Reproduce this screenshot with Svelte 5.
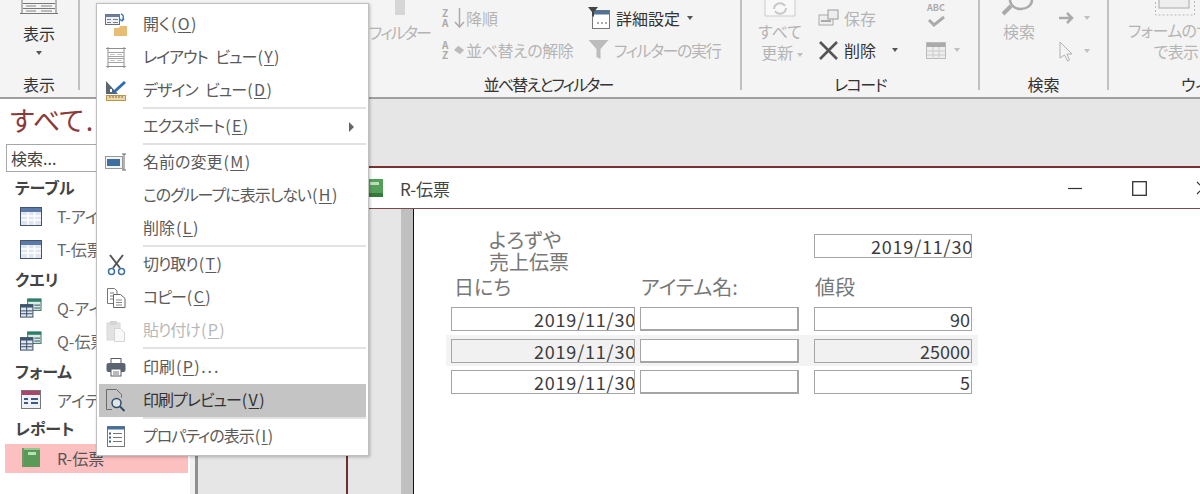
<script>
  const menu = [
    { icon: 'open', label: '開く', key: 'O' },
    { icon: 'layout', label: 'レイアウト ビュー', key: 'Y', tight: true },
    { icon: 'design', label: 'デザイン ビュー', key: 'D', tight: true, sep: true },
    { label: 'エクスポート', key: 'E', tight: true, sub: true, sep: true },
    { icon: 'rename', label: '名前の変更', key: 'M' },
    { label: 'このグループに表示しない', key: 'H', tight: true },
    { label: '削除', key: 'L', sep: true },
    { icon: 'cut', label: '切り取り', key: 'T', tight: true },
    { icon: 'copy', label: 'コピー', key: 'C', tight: true },
    { icon: 'paste', label: '貼り付け', key: 'P', tight: true, disabled: true, sep: true, wide: true },
    { icon: 'print', label: '印刷', key: 'P', more: '...' },
    { icon: 'preview', label: '印刷プレビュー', key: 'V', tight: true, active: true, sep: true },
    { icon: 'props', label: 'プロパティの表示', key: 'I', tight: true }
  ];
  const rows = [
    { date: '2019/11/30', price: '90' },
    { date: '2019/11/30', price: '25000', alt: true },
    { date: '2019/11/30', price: '5' }
  ];
</script>

{#snippet tableIcon()}
  <svg width="22" height="19" viewBox="0 0 22 19"><rect x="0.5" y="0.5" width="21" height="18" fill="#dfe6f2" stroke="#44546f"/><rect x="1" y="1" width="20" height="4" fill="#5b7aa8"/><path d="M1 9h20M1 13h20M8 5v13M14.5 5v13" stroke="#fff" stroke-width="1.5"/></svg>
{/snippet}
{#snippet queryIcon()}
  <svg width="23" height="20" viewBox="0 0 23 20"><rect x="8" y="0.5" width="14" height="12" fill="#dcebe4" stroke="#2f6f62"/><rect x="8" y="0.5" width="14" height="3" fill="#2f7d6b"/><rect x="0.5" y="6.5" width="13" height="13" fill="#dfe6ee" stroke="#33475f"/><rect x="0.5" y="6.5" width="13" height="3" fill="#3b566f"/><path d="M1 13h12M1 16h12M7 9v10M15 7h6M15 10h6" stroke="#33475f"/></svg>
{/snippet}
{#snippet icon(name)}
  {#if name === 'open'}
    <svg width="22" height="23" viewBox="0 0 22 23"><rect x="0.5" y="1.5" width="14" height="10" fill="#eef1f5" stroke="#66707c"/><rect x="0.5" y="1.5" width="14" height="2.5" fill="#6b7f99"/><path d="M2 6.500h4M2 9.500h4M8 6.500h5M8 9.500h5" stroke="#77808c"/><path d="M16 1c3 1 3 4 1 7M17 8l-2.500-2M17 8l2-2.500" fill="none" stroke="#3f78c0" stroke-width="1.5"/><path d="M9 15h5l1-2h7v10H9z" fill="#e7bd75"/></svg>
  {:else if name === 'layout'}
    <svg width="20" height="21" viewBox="0 0 20 21"><path d="M2 0v21M18 0v21M0 1.500h20M0 19.500h20" stroke="#8f8f8f" fill="none"/><path d="M2 5.500h16M2 9.500h16M2 11.500h16M2 15.500h16" stroke="#a4a4a4" fill="none"/><path d="M4 7.500h5M11 7.500h5M4 13.500h5M11 13.500h5" stroke="#c4c4c4"/></svg>
  {:else if name === 'design'}
    <svg width="22" height="21" viewBox="0 0 22 21"><path d="M1 1v13h12z" fill="#5d6570"/><path d="M5 9h2v3H5z" fill="#fff"/><path d="M8 11l11-10 2 2-11 10-3 1z" fill="#2f6db5"/><rect x="1.500" y="15.500" width="19" height="5" fill="#ecd7a8" stroke="#b8944f"/><path d="M5 16v2M8 16v2M11 16v2M14 16v2M17 16v2" stroke="#8a6d30"/></svg>
  {:else if name === 'rename'}
    <svg width="22" height="20" viewBox="0 0 22 20"><rect x="0.5" y="3.500" width="17" height="12" fill="#f4f4f4" stroke="#999"/><rect x="2" y="6" width="13" height="7" fill="#3f6f9f"/><path d="M17 1h4M19 1v16M17 17h4" stroke="#666" fill="none"/></svg>
  {:else if name === 'cut'}
    <svg width="19" height="22" viewBox="0 0 19 22"><path d="M3 1l10 13M16 1L6 14" stroke="#555" stroke-width="2"/><circle cx="4.5" cy="17.500" r="3" fill="none" stroke="#3f6f9f" stroke-width="1.500"/><circle cx="14.500" cy="17.500" r="3" fill="none" stroke="#3f6f9f" stroke-width="1.500"/></svg>
  {:else if name === 'copy'}
    <svg width="19" height="20" viewBox="0 0 19 20"><path d="M0.500 0.500h7l2.500 2.500v3M6 15.500H0.500V0.500M3 5h4M3 8h3M3 11h3" fill="#fff" stroke="#777"/><path d="M6.500 6.500h7l4.500 4v9H6.500z" fill="#fff" stroke="#666"/><path d="M9 12h6M9 14.500h6M9 17h6" stroke="#888"/></svg>
  {:else if name === 'paste'}
    <svg width="20" height="22" viewBox="0 0 20 22"><rect x="1" y="3" width="13" height="17" fill="#e2e2e2" stroke="#d8d8d8"/><rect x="4" y="1" width="7" height="4" fill="#d4d4d4"/><path d="M8.500 8.500h6l4 4v9h-10z" fill="#f8f8f8" stroke="#d4d4d4"/></svg>
  {:else if name === 'print'}
    <svg width="20" height="19" viewBox="0 0 20 19"><rect x="5" y="0.500" width="10" height="5" fill="#fff" stroke="#555c68"/><rect x="0.500" y="5" width="19" height="9" rx="2" fill="#5a636f"/><rect x="5" y="11" width="10" height="7" fill="#fff" stroke="#555c68"/><path d="M7 14h6M7 16h6" stroke="#777"/></svg>
  {:else if name === 'preview'}
    <svg width="20" height="23" viewBox="0 0 20 23"><path d="M0.500 0.500h10l5 5v3M6 20.500H0.500V0.500" fill="none" stroke="#6a6a6a"/><circle cx="10.500" cy="14" r="4.500" fill="#dfe4e8" stroke="#304d68" stroke-width="1.500"/><path d="M14 17.500l4.500 4.500" stroke="#304d68" stroke-width="2"/></svg>
  {:else if name === 'props'}
    <svg width="18" height="21" viewBox="0 0 18 21"><rect x="0.500" y="0.500" width="17" height="20" fill="#fff" stroke="#777"/><rect x="0.500" y="0.500" width="17" height="3" fill="#456f9c"/><path d="M6 7.500h9M6 11.500h9M6 15.500h9" stroke="#777"/><path d="M2 7.500h2M2 11.500h2M2 15.500h2" stroke="#3a5f88" stroke-width="2"/></svg>
  {/if}
{/snippet}

<div class="app">
  <header class="ribbon">
    <section class="group g-view">
      <div class="big">
        <svg width="38" height="15" viewBox="0 0 38 15"><path d="M2 0v14M36 0v14M0 13.500h38M3 3.500h32M3 8.500h32" stroke="#777" fill="none"/><path d="M6 6h10M21 6h11M6 11h10M21 11h11" stroke="#bbb" stroke-width="2"/></svg>
        <span class="lbl">表示</span>
        <span class="caret"></span>
      </div>
      <footer>表示</footer>
    </section>
    <section class="group g-sort">
      <div class="sortbody">
        <div class="filterbtn dis">
          <svg width="12" height="15" viewBox="0 0 12 15"><rect width="10" height="15" fill="#d6d6d6"/></svg>
          <span class="k2">フィルター</span>
        </div>
        <div class="sortcol">
          <div class="line dis">
            <span class="stack"><b>Z</b><b>A</b></span>
            <svg class="sarrow" width="11" height="20" viewBox="0 0 11 20"><path d="M5.500 0v18M1 14l4.500 5 4.500-5" stroke="#aaa" stroke-width="1.500" fill="none"/></svg>
            <span class="t">降順</span>
          </div>
          <div class="line dis">
            <span class="stack"><b>A</b><b>Z</b></span>
            <svg class="sarrow" width="13" height="12" viewBox="0 0 13 12"><path d="M0 6l5-5 7 5-5 5z" fill="#bbb"/></svg>
            <span class="t k1">並べ替えの解除</span>
          </div>
        </div>
        <div class="sortcol">
          <div class="line">
            <svg class="ic21" width="22" height="22" viewBox="0 0 22 22"><rect x="4.500" y="3.500" width="17" height="18" fill="#fff" stroke="#777"/><rect x="5" y="3.500" width="16" height="4" fill="#4f7396"/><path d="M0 0h10L6 5v5L4 8.500V5z" fill="#444"/><path d="M9 16h2M13 16h2M17 16h2" stroke="#555"/></svg>
            <span class="t dark">詳細設定</span><span class="caret adv"></span>
          </div>
          <div class="line dis">
            <svg class="ic21 run" width="21" height="20" viewBox="0 0 21 20"><path d="M0 0h20l-8 9v10l-4-2V9z" fill="#bcbcbc"/></svg>
            <span class="t k3">フィルターの実行</span>
          </div>
        </div>
      </div>
      <footer class="k2">並べ替えとフィルター</footer>
    </section>
    <section class="group g-rec">
      <div class="recbody">
        <div class="refresh dis">
          <svg width="32" height="17" viewBox="0 0 32 17"><path d="M1 0v16h30V0" fill="#f8f8f8" stroke="#ccc"/><path d="M10 9a6 6 0 0 1 11-3M22 8a6 6 0 0 1-11 3" fill="none" stroke="#c8c8c8" stroke-width="2"/></svg>
          <span>すべて</span><span class="re2">更新 <i class="caret light"></i></span>
        </div>
        <div class="reccol">
          <div class="line dis"><svg width="21" height="18" viewBox="0 0 21 18"><rect x="1" y="6" width="14" height="10" fill="#eee" stroke="#aaa"/><rect x="10" y="1" width="10" height="9" fill="#eee" stroke="#999"/><path d="M3 12h10" stroke="#aaa" stroke-width="2"/></svg><span class="t">保存</span></div>
          <div class="line"><svg width="21" height="19" viewBox="0 0 21 19"><path d="M2 1l17 17M19 1L2 18" stroke="#555" stroke-width="2.600"/></svg><span class="t dark">削除</span><span class="caret del"></span></div>
        </div>
        <div class="reccol spell">
          <div class="abc"><small>ABC</small><svg width="19" height="11" viewBox="0 0 19 11"><path d="M2 4l5 5 10-8" stroke="#aaa" stroke-width="3" fill="none"/></svg></div>
          <div class="line"><svg width="20" height="17" viewBox="0 0 20 17"><rect x="0.500" y="0.500" width="19" height="16" fill="#eee" stroke="#bbb"/><rect x="1" y="1" width="18" height="4" fill="#aaa"/><path d="M1 9h18M1 13h18M7 5v12M13 5v12" stroke="#ccc"/></svg><span class="caret light sp"></span></div>
        </div>
      </div>
      <footer class="k3">レコード</footer>
    </section>
    <section class="group g-find">
      <div class="findbody">
        <div class="findbtn dis">
          <svg width="36" height="16" viewBox="0 0 36 16"><path d="M2 14L10 6" stroke="#aaa" stroke-width="4"/><path d="M9 0a11 9 0 0 0 22 0" fill="none" stroke="#aaa" stroke-width="2.500"/></svg>
          <span>検索</span>
        </div>
        <div class="findcol">
          <div class="fline"><svg width="17" height="14" viewBox="0 0 17 14"><path d="M1 7h13M9 2l5 5-5 5" stroke="#aaa" stroke-width="2.500" fill="none"/></svg><i class="caret light"></i></div>
          <div class="fline"><svg width="17" height="21" viewBox="0 0 17 21"><path d="M2 1l12 12H9l2.500 6-2 1-3-6L2 17z" fill="#f4f4f4" stroke="#b0b0b0"/></svg><i class="caret light"></i></div>
        </div>
      </div>
      <footer>検索</footer>
    </section>
    <section class="group g-win">
      <div class="winbody dis">
        <svg width="40" height="16" viewBox="0 0 40 16"><rect x="0.500" y="-4" width="39" height="19" fill="none" stroke="#bbb" stroke-dasharray="2 2"/><rect x="4" y="-2" width="30" height="10" fill="#eee" stroke="#aaa"/></svg>
        <span>フォームのサイズ</span><span>で表示</span>
      </div>
      <footer>ウィンドウ</footer>
    </section>
  </header>

  <div class="body">
    <aside class="nav">
      <div class="navtitle">すべて<span class="dots">...</span></div>
      <div class="search">検索...</div>
      <h3>テーブル</h3>
      <div class="navitem">{@render tableIcon()}<span>T-アイテム</span></div>
      <div class="navitem">{@render tableIcon()}<span>T-伝票</span></div>
      <h3>クエリ</h3>
      <div class="navitem">{@render queryIcon()}<span>Q-アイテム</span></div>
      <div class="navitem">{@render queryIcon()}<span>Q-伝票</span></div>
      <h3>フォーム</h3>
      <div class="navitem short"><svg width="20" height="19" viewBox="0 0 20 19"><rect x="0.500" y="0.500" width="19" height="18" fill="#eef2f8" stroke="#777"/><rect x="1" y="1" width="18" height="4" fill="#a8466a"/><path d="M3 9h4M3 13h4" stroke="#3c5a80" stroke-width="2"/><rect x="10" y="8" width="7" height="2" fill="#3c5a80"/><rect x="10" y="12" width="7" height="2" fill="#3c5a80"/></svg><span>アイテム</span></div>
      <h3>レポート</h3>
      <div class="navitem sel"><svg width="18" height="19" viewBox="0 0 18 19"><rect width="2" height="19" fill="#7a9068"/><rect x="2" width="16" height="19" fill="#5a9a58"/><rect x="2" width="16" height="2" fill="#8fc98f"/><rect x="6" y="4" width="8" height="3" fill="#b8e0b8"/></svg><span>R-伝票</span></div>
    </aside>
    <div class="splitter"></div>
    <main class="mdi">
      <div class="win">
        <div class="titlebar">
          <svg width="18" height="18" viewBox="0 0 18 18"><rect width="18" height="18" fill="#55a058"/><rect x="5" y="3" width="9" height="3" fill="#b8e0b8"/><rect y="14" width="18" height="4" fill="#347a3a"/></svg>
          <span class="ttl">R-伝票</span>
          <span class="btns">
            <svg width="14" height="14" viewBox="0 0 14 14"><path d="M0 7.500h14" stroke="#333" stroke-width="1.200"/></svg>
            <svg width="15" height="15" viewBox="0 0 15 15"><rect x="0.700" y="0.700" width="13.600" height="13.600" fill="none" stroke="#333" stroke-width="1.300"/></svg>
            <svg width="14" height="14" viewBox="0 0 14 14"><path d="M1 1l12 12M13 1L1 13" stroke="#333" stroke-width="1.200"/></svg>
          </span>
        </div>
        <div class="client">
          <div class="margin"></div>
          <div class="report">
            <div class="rhead">
              <div class="rtitle">よろずや<br />売上伝票</div>
              <div class="field rdate">2019/11/30</div>
            </div>
            <div class="cols">
              <span>日にち</span><span>アイテム名:</span><span>値段</span>
            </div>
            <div class="rowsbox">
              {#each rows as r}
                <div class="row" class:alt={r.alt}>
                  <div class="field date">{r.date}</div>
                  <div class="field name"></div>
                  <div class="field price">{r.price}</div>
                </div>
              {/each}
            </div>
          </div>
        </div>
      </div>
    </main>
  </div>

  <div class="menu">
    {#each menu as m}
      <div class="mi" class:active={m.active} class:disabled={m.disabled} class:sep={m.sep} class:wide={m.wide}>
        <span class="mic">{#if m.icon}{@render icon(m.icon)}{/if}</span>
        <span class="mlabel"><span class:tight={m.tight}>{m.label}</span><span class="key">(<u>{m.key}</u>)</span>{#if m.more}<span class="more">{m.more}</span>{/if}</span>
        {#if m.sub}<span class="arrow"></span>{/if}
      </div>
    {/each}
  </div>
</div>

<style>
  :global(body) { margin: 0; }
  .app {
    position: relative; width: 1200px; height: 494px; overflow: hidden;
    display: flex; flex-direction: column; background: #e6e6e6;
    font-family: "Noto Sans CJK JP", "Noto Sans", sans-serif; color: #444;
    font-feature-settings: "palt"; font-size: 16px;
  }
  .ribbon {
    height: 97px; flex: none; display: flex; background: #f4f4f4;
    border-bottom: 2px solid #9f9f9f;
  }
  .group {
    position: relative; flex: none; box-sizing: border-box; height: 90px;
    border-right: 2px solid #c0c0c0;
  }
  .group footer {
    position: absolute; left: 0; right: 0; top: 73px; text-align: center;
    line-height: 22px; color: #333; white-space: nowrap;
  }
  .k1 { letter-spacing: -0.4px; }
  .k2 { letter-spacing: -1.8px; }
  .k3 { letter-spacing: -1.4px; }
  .g-view { width: 80px; }
  .g-sort { width: 662px; }
  .g-rec { width: 238px; }
  .g-find { width: 129px; }
  .g-win { width: 212px; border-right: 0; }
  .g-sort footer { padding-left: 276px; }
  .caret {
    display: inline-block; width: 0; height: 0; border: 3.5px solid transparent;
    border-top: 4px solid #555; border-bottom: 0;
  }
  .caret.light { border-top-color: #c0c0c0; }
  .dis { color: #b4b4b4; }
  .dark { color: #333; }
  .t { line-height: 22px; }

  .big { display: flex; flex-direction: column; align-items: center; }
  .lbl { line-height: 22px; margin-top: 7px; color: #333; }
  .big .caret { margin-top: 7px; }

  .sortbody { display: flex; height: 73px; padding-left: 289px; }
  .filterbtn { width: 73px; flex: none; display: flex; flex-direction: column; align-items: flex-start; }
  .filterbtn svg { margin-left: 26px; }
  .filterbtn span { margin-top: 6px; line-height: 22px; white-space: nowrap; }
  .sortcol { width: 146px; flex: none; display: flex; flex-direction: column; padding-top: 6px; gap: 8px; }
  .line { display: flex; align-items: center; height: 24px; white-space: nowrap; }
  .stack { display: flex; flex-direction: column; width: 10px; font-size: 10px; line-height: 10px; color: #aaa; }
  .sarrow { margin: 0 1px 0 2px; width: 11px; }
  .ic21 { width: 22px; margin-right: 6px; flex: none; }
  .ic21.run { margin-right: 4px; }
  .caret.adv { margin-left: 7px; }

  .recbody { display: flex; height: 73px; }
  .refresh { width: 76px; flex: none; display: flex; flex-direction: column; align-items: center; line-height: 21px; white-space: nowrap; }
  .refresh svg { margin-bottom: 4px; }
  .re2 { padding-left: 4px; }
  .refresh i { vertical-align: middle; }
  .reccol { width: 108px; flex: none; display: flex; flex-direction: column; padding-top: 6px; gap: 8px; }
  .reccol .line { gap: 5px; }
  .caret.del { margin-left: 11px; }
  .spell { width: 50px; padding-top: 0; gap: 8px; }
  .abc { display: flex; flex-direction: column; align-items: center; width: 20px; height: 30px; }
  .abc small { font-size: 9px; line-height: 16px; color: #aaa; font-weight: 700; }
  .caret.sp { margin-left: 3px; }

  .findbody { display: flex; height: 73px; }
  .findbtn { width: 78px; flex: none; display: flex; flex-direction: column; align-items: center; line-height: 22px; }
  .findbtn span { margin-top: 4px; }
  .findcol { padding-top: 8px; display: flex; flex-direction: column; gap: 13px; }
  .fline { display: flex; align-items: center; gap: 9px; height: 20px; }

  .winbody { width: 148px; display: flex; flex-direction: column; align-items: center; line-height: 21px; white-space: nowrap; letter-spacing: -0.6px; }
  .winbody svg { margin: 0 0 4px -16px; }
  .winbody span:last-child { padding-right: 14px; }

  .body { flex: 1; display: flex; min-height: 0; }
  .nav { width: 190px; flex: none; background: #fff; box-sizing: border-box; padding-left: 5px; }
  .navtitle { font-size: 27px; line-height: 36px; color: #8b3a3a; padding: 3px 0 0 5px; margin-bottom: 6px; white-space: nowrap; height: 39px; box-sizing: border-box; }
  .dots { letter-spacing: 5px; padding-left: 2px; }
  .search { margin-top: 6px; margin-left: 1px; border: 1px solid #a8a8a8; width: 175px; height: 28px; box-sizing: border-box; line-height: 26px; padding-left: 4px; }
  h3 { margin: 0; font-size: 16px; line-height: 24px; font-weight: 700; color: #444; padding-left: 10px; height: 26px; }
  .search + h3 { margin-top: 3px; }
  .navitem { height: 33px; box-sizing: border-box; padding: 0 0 3px 15px; display: flex; align-items: center; color: #666; white-space: nowrap; }
  .navitem svg { width: 22px; flex: none; margin-right: 15px; }
  .navitem.short { height: 31px; padding-bottom: 2px; }
  .navitem.sel { background: #fcc0c0; width: 183px; height: 29px; margin-top: 2px; padding-bottom: 2px; color: #555; }
  .splitter { width: 8px; flex: none; box-sizing: border-box; background: #f0f0f0; border-right: 3px solid #8f8f8f; }
  .mdi { flex: 1; min-width: 0; overflow: hidden; padding: 67px 0 0 148px; background: #e6e6e6; }
  .win { width: 880px; height: 340px; border-top: 2px solid #7b2f2f; border-left: 2px solid #6b2f2f; background: #e6e6e6; }
  .titlebar { height: 40px; background: #fff; border-bottom: 1px solid #7b4a4a; display: flex; align-items: center; padding: 0 18px 0 17px; }
  .ttl { margin-left: 17px; color: #444; font-size: 17px; }
  .btns { margin-left: auto; display: flex; gap: 49.5px; align-items: center; }
  .client { display: flex; height: 300px; }
  .margin { width: 65px; flex: none; box-sizing: border-box; border-right: 12px solid #c0c0c0; }
  .report { flex: 1; background: #fff; border-left: 1px solid #111; padding: 25px 0 0 32px; }
  .rhead { display: flex; height: 40px; }
  .rtitle { margin: -5px 0 0 43px; width: 325px; flex: none; font-size: 20px; line-height: 22px; color: #777; }
  .field { box-sizing: border-box; height: 24px; border: 1px solid #a5a5a5; background: #fff; font-size: 18px; line-height: 22px; color: #3c3c3c; overflow: hidden; white-space: nowrap; font-feature-settings: normal; letter-spacing: 0.8px; }
  .rdate { width: 158px; padding-left: 56px; }
  .cols { display: grid; grid-template-columns: 187px 174px 100px; padding-left: 8px; font-size: 20px; line-height: 26px; color: #777; height: 29px; }
  .rowsbox { display: flex; flex-direction: column; width: 532px; }
  .row { display: flex; padding: 4px 0 0 5px; height: 31.500px; box-sizing: border-box; }
  .row.alt { background: #f3f3f3; }
  .row.alt .date, .row.alt .price { background: #f1f1f1; }
  .date { width: 184px; padding-left: 82px; }
  .name { width: 159px; margin-left: 5px; border-width: 1px 2px 2px 1px; }
  .price { width: 158px; margin-left: 15px; text-align: right; padding-right: 1px; letter-spacing: 0; }

  .menu {
    position: absolute; left: 96px; top: 3px; width: 273px; height: 453px; box-sizing: border-box;
    background: #fff; border: 1px solid #c0c0c0; box-shadow: 1px 1px 3px rgba(0,0,0,.25);
    padding: 4px 2px;
    display: flex; flex-direction: column;
  }
  .mi { position: relative; height: 33px; display: flex; align-items: center; flex: none; color: #5a5a5a; }
  .mi.sep { margin-bottom: 3px; }
  .mi.wide { margin-bottom: 4px; }
  .mi.sep::after { content: ""; position: absolute; left: 44px; right: 0; bottom: -2px; height: 2px; background: #e2e2e2; }
  .mic { width: 34px; margin-right: 10px; flex: none; display: flex; justify-content: center; }
  .mlabel { white-space: nowrap; padding-bottom: 3px; }
  .tight { letter-spacing: -1px; word-spacing: 5px; }
  .key { letter-spacing: 1.4px; padding-left: 1px; }
  .more { letter-spacing: 2px; padding-left: 0; }
  .mi.disabled { color: #b8b8b8; }
  .mi.active { background: #c4c4c4; color: #333; }
  u { text-underline-offset: 2px; text-decoration-thickness: 1px; }
  .arrow { position: absolute; right: 12px; top: 12px; width: 0; height: 0; border: 5px solid transparent; border-left: 5px solid #666; border-right: 0; }
</style>
